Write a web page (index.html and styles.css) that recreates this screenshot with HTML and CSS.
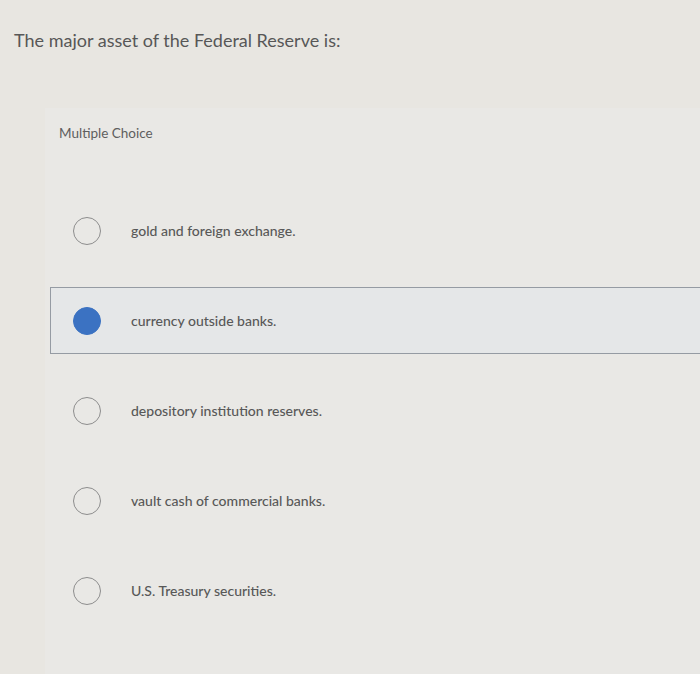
FILE: index.html
```html
<!DOCTYPE html>
<html>
<head>
<meta charset="utf-8">
<link rel="stylesheet" href="styles.css">
</head>
<body>
<div class="page">
  <h1 class="question">The major asset of the Federal Reserve is:</h1>
  <div class="card">
    <div class="kind">Multiple Choice</div>
    <div class="options">
      <div class="option"><span class="radio"></span><span class="label">gold and foreign exchange.</span></div>
      <div class="option selected"><span class="radio"></span><span class="label">currency outside banks.</span></div>
      <div class="option"><span class="radio"></span><span class="label">depository institution reserves.</span></div>
      <div class="option"><span class="radio"></span><span class="label">vault cash of commercial banks.</span></div>
      <div class="option"><span class="radio"></span><span class="label">U.S. Treasury securities.</span></div>
    </div>
  </div>
</div>
</body>
</html>
```

FILE: styles.css
```css
html, body {
  margin: 0;
  padding: 0;
}
body {
  background: #e8e6e1;
  font-family: Lato, "Open Sans", "Liberation Sans", sans-serif;
  width: 700px;
  height: 674px;
  overflow: hidden;
}
.page {
  padding-top: 29px;
}
.question {
  margin: 0 0 0 14px;
  font-size: 18px;
  font-weight: 400;
  color: #575757;
  line-height: 22px;
}
.card {
  margin-top: 57px;
  margin-left: 45px;
  background: #e9e8e5;
  padding-top: 16px;
  height: 550px;
}
.kind {
  margin-left: 14px;
  font-size: 13.5px;
  color: #5e5e5e;
  line-height: 18px;
}
.options {
  margin-top: 55px;
  margin-left: 5px;
  display: flex;
  flex-direction: column;
  gap: 23px;
}
.option {
  height: 67px;
  box-sizing: border-box;
  display: flex;
  align-items: center;
  padding-left: 22px;
  border: 1px solid transparent;
}
.option.selected {
  background: #e5e7e8;
  border-color: #959ba3;
  border-right: none;
}
.radio {
  width: 28px;
  height: 28px;
  box-sizing: border-box;
  border-radius: 50%;
  border: 1.5px solid #8d8d8d;
  flex: none;
}
.selected .radio {
  background: #3b72c2;
  border-color: #3b72c2;
}
.label {
  margin-left: 30px;
  font-size: 14px;
  font-weight: 500;
  color: #585858;
}
```
